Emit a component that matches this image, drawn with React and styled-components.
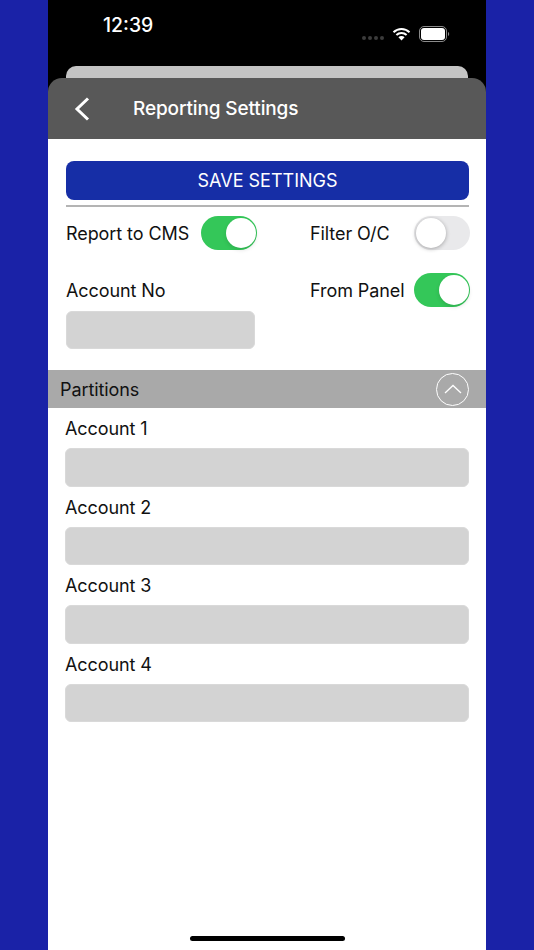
import React from "react";
import styled, { createGlobalStyle } from "styled-components";

const accounts = ["Account 1", "Account 2", "Account 3", "Account 4"];

const App = () => {
  return (
    <>
      <GlobalStyle />
      <Page>
        <Phone>
          <StatusBar>
            <Clock>12:39</Clock>
            <StatusIcons>
              <Dots>
                <i />
                <i />
                <i />
                <i />
              </Dots>
              <svg width="19" height="14" viewBox="0 0 18 14">
                <path d="M1 5.2a11.4 11.4 0 0 1 16 0" fill="none" stroke="#fff" strokeWidth="2" />
                <path d="M3.9 8a7.3 7.3 0 0 1 10.2 0" fill="none" stroke="#fff" strokeWidth="2" />
                <path d="M5.9 10.3 9 13.6l3.1-3.3a4.4 4.4 0 0 0-6.2 0z" fill="#fff" />
              </svg>
              <svg width="31" height="16" viewBox="0 0 31 16">
                <rect x="0.5" y="0.5" width="27" height="15" rx="4.5" fill="none" stroke="#8a8a8a" />
                <rect x="2" y="2" width="24" height="12" rx="3" fill="#fff" />
                <path d="M29 6v4a2 2 0 0 0 1.2-2A2 2 0 0 0 29 6z" fill="#8a8a8a" />
              </svg>
            </StatusIcons>
          </StatusBar>
          <BackCard />
          <Header>
            <BackButton>
              <svg width="16" height="24" viewBox="0 0 16 24">
                <path d="M14 1.5 3 12l11 10.5" fill="none" stroke="#fff" strokeWidth="3" />
              </svg>
            </BackButton>
            <Title>Reporting Settings</Title>
          </Header>
          <Sheet>
            <TopSection>
              <SaveButton>SAVE SETTINGS</SaveButton>
              <Divider />
              <SettingsGrid>
                <ToggleRow>
                  <Label>Report to CMS</Label>
                  <Switch $on />
                </ToggleRow>
                <ToggleRow $spread>
                  <Label>Filter O/C</Label>
                  <Switch />
                </ToggleRow>
                <AccountColumn>
                  <Label>Account No</Label>
                  <Field />
                </AccountColumn>
                <ToggleRow $spread>
                  <Label>From Panel</Label>
                  <Switch $on />
                </ToggleRow>
              </SettingsGrid>
            </TopSection>
            <SectionBar>
              <SectionTitle>Partitions</SectionTitle>
              <Collapse>
                <svg width="18" height="10" viewBox="0 0 18 10">
                  <path d="M1 9 9 1.5 17 9" fill="none" stroke="#fff" strokeWidth="1.3" />
                </svg>
              </Collapse>
            </SectionBar>
            <PartitionList>
              {accounts.map((name) => (
                <Partition key={name}>
                  <Label>{name}</Label>
                  <Field $wide />
                </Partition>
              ))}
            </PartitionList>
            <HomeBar />
          </Sheet>
        </Phone>
      </Page>
    </>
  );
};

export default App;

const GlobalStyle = createGlobalStyle`
  html, body {
    margin: 0;
    padding: 0;
    background: #1a22a7;
  }
  * {
    box-sizing: border-box;
  }
`;

const Page = styled.div`
  width: 534px;
  height: 950px;
  padding: 0 48px;
  background: #1a22a7;
  font-family: Inter, "Liberation Sans", sans-serif;
  overflow: hidden;
`;

const Phone = styled.div`
  width: 438px;
  height: 950px;
  display: flex;
  flex-direction: column;
  background: #000;
`;

const StatusBar = styled.div`
  height: 66px;
  display: flex;
  justify-content: space-between;
  padding: 13px 36px 0 55px;
`;

const Clock = styled.div`
  color: #fff;
  font-size: 19.4px;
  font-weight: 500;
  line-height: 25px;
`;

const StatusIcons = styled.div`
  height: 16px;
  margin-top: 13px;
  display: flex;
  align-items: center;
  gap: 8px;
`;

const Dots = styled.div`
  display: flex;
  gap: 2px;
  margin-top: 8px;
  i {
    width: 4px;
    height: 4px;
    border-radius: 50%;
    background: #3c3c3c;
  }
`;

const BackCard = styled.div`
  height: 12px;
  margin: 0 18px;
  background: #c4c4c4;
  border-radius: 10px 10px 0 0;
`;

const Header = styled.div`
  height: 61px;
  flex-shrink: 0;
  display: flex;
  align-items: center;
  background: #585858;
  border-radius: 14px 14px 0 0;
`;

const BackButton = styled.div`
  width: 85px;
  padding-left: 26px;
  display: flex;
  align-items: center;
`;

const Title = styled.div`
  color: #fff;
  font-size: 19px;
  font-weight: 500;
  letter-spacing: -0.13px;
`;

const Sheet = styled.div`
  flex: 1;
  display: flex;
  flex-direction: column;
  background: #fff;
`;

const TopSection = styled.div`
  height: 231px;
  padding: 22px 17px 0 18px;
`;

const SaveButton = styled.div`
  height: 39px;
  display: flex;
  align-items: center;
  justify-content: center;
  color: #fff;
  font-size: 18px;
  background: #162ea6;
  border-radius: 8px;
`;

const Divider = styled.div`
  height: 2px;
  margin: 5px 0 9px;
  background: #b4b4b4;
`;

const SettingsGrid = styled.div`
  display: grid;
  grid-template-columns: 244px 160px;
  grid-template-rows: 57px auto;
`;

const Label = styled.div`
  color: #111;
  font-size: 18px;
  letter-spacing: -0.08px;
  line-height: 24px;
  white-space: nowrap;
`;

const ToggleRow = styled.div`
  height: 34px;
  display: flex;
  align-items: center;
  justify-content: ${({ $spread }) => ($spread ? "space-between" : "flex-start")};
  gap: ${({ $spread }) => ($spread ? "0" : "12px")};
  ${Label} {
    margin-top: 2px;
  }
`;

const Switch = styled.div`
  position: relative;
  width: 56px;
  height: 34px;
  flex-shrink: 0;
  border-radius: 17px;
  background: ${({ $on }) => ($on ? "#34c759" : "#e9e9eb")};
  &::after {
    content: "";
    position: absolute;
    top: 2px;
    left: ${({ $on }) => ($on ? "24.5px" : "1.5px")};
    width: 30px;
    height: 30px;
    border-radius: 50%;
    background: #fff;
    box-shadow: ${({ $on }) =>
      $on ? "0 2px 4px rgba(0, 0, 0, 0.12)" : "0 1px 4px rgba(0, 0, 0, 0.3)"};
  }
`;

const AccountColumn = styled.div`
  display: flex;
  flex-direction: column;
  gap: 8px;
  padding-top: 6px;
`;

const Field = styled.div`
  width: ${({ $wide }) => ($wide ? "404px" : "189px")};
  height: 38.4px;
  flex-shrink: 0;
  background: #d3d3d3;
  border: 1px solid #d9d9d9;
  border-radius: 6px;
`;

const SectionBar = styled.div`
  height: 38px;
  display: flex;
  align-items: center;
  justify-content: space-between;
  padding: 0 17px 0 12px;
  background: #a9a9a9;
`;

const SectionTitle = styled.div`
  color: #111;
  font-size: 18px;
  letter-spacing: -0.08px;
`;

const Collapse = styled.div`
  width: 33px;
  height: 33px;
  display: flex;
  align-items: center;
  justify-content: center;
  border: 1.7px solid #fff;
  border-radius: 50%;
`;

const PartitionList = styled.div`
  display: flex;
  flex-direction: column;
  gap: 9.1px;
  padding: 9.3px 17px 0;
`;

const Partition = styled.div`
  display: flex;
  flex-direction: column;
  gap: 7px;
`;

const HomeBar = styled.div`
  width: 155px;
  height: 5px;
  margin: auto auto 9px;
  background: #000;
  border-radius: 3px;
`;
